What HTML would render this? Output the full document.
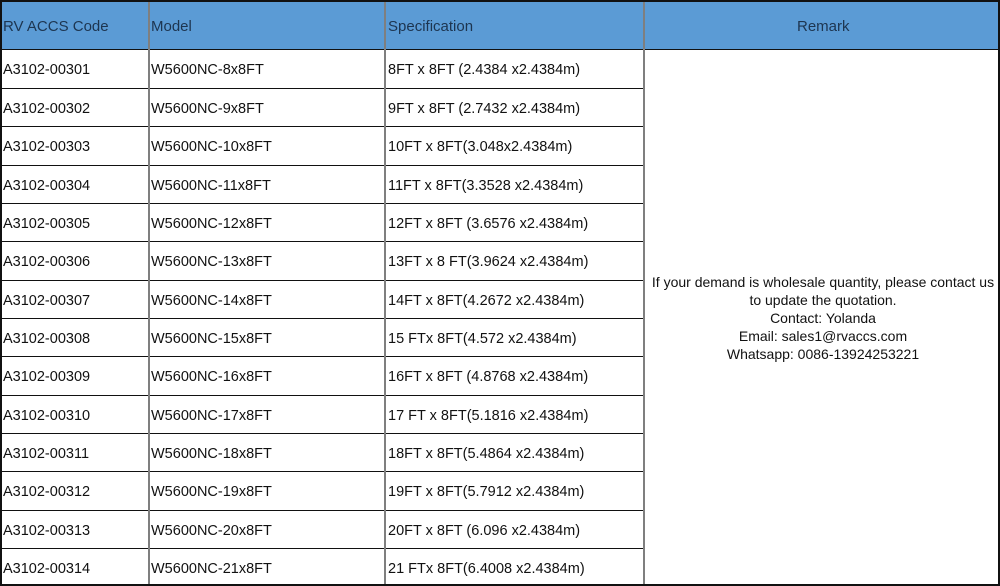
<!DOCTYPE html>
<html><head><meta charset="utf-8"><style>
html,body{margin:0;padding:0;background:#fff;}
body{width:1000px;height:586px;position:relative;overflow:hidden;font-family:"Liberation Sans",Arial,sans-serif;font-size:14px;color:#111;}
.hdr{position:absolute;left:0;top:0;width:1000px;height:49px;background:#5b9bd5;}
.h{position:absolute;white-space:nowrap;line-height:16px;color:#1d3550;top:19px;font-size:15px;}
.r{position:absolute;left:0;width:645px;height:38px;border-top:1px solid #111;box-sizing:border-box;}
.r span{position:absolute;top:12px;white-space:nowrap;line-height:16px;font-size:14.5px;}
.a{left:3px}.b{left:151px}.c{left:388px}
.vl{position:absolute;top:0;width:2px;height:586px;background:#7f7f7f;}
.rem{position:absolute;left:646px;width:354px;top:273px;text-align:center;line-height:18px;}
</style></head><body>
<div class="hdr"></div>
<div class="h" style="left:3px">RV ACCS Code</div>
<div class="h" style="left:151px">Model</div>
<div class="h" style="left:388px">Specification</div>
<div class="h" style="left:797px">Remark</div>
<div style="position:absolute;left:0;top:49px;width:1000px;height:1px;background:#111"></div>
<div class="r" style="top:49px"><span class="a">A3102-00301</span><span class="b">W5600NC-8x8FT</span><span class="c">8FT x 8FT (2.4384 x2.4384m)</span></div>
<div class="r" style="top:88px"><span class="a">A3102-00302</span><span class="b">W5600NC-9x8FT</span><span class="c">9FT x 8FT (2.7432 x2.4384m)</span></div>
<div class="r" style="top:126px"><span class="a">A3102-00303</span><span class="b">W5600NC-10x8FT</span><span class="c">10FT x 8FT(3.048x2.4384m)</span></div>
<div class="r" style="top:165px"><span class="a">A3102-00304</span><span class="b">W5600NC-11x8FT</span><span class="c">11FT x 8FT(3.3528 x2.4384m)</span></div>
<div class="r" style="top:203px"><span class="a">A3102-00305</span><span class="b">W5600NC-12x8FT</span><span class="c">12FT x 8FT (3.6576 x2.4384m)</span></div>
<div class="r" style="top:241px"><span class="a">A3102-00306</span><span class="b">W5600NC-13x8FT</span><span class="c">13FT x 8 FT(3.9624 x2.4384m)</span></div>
<div class="r" style="top:280px"><span class="a">A3102-00307</span><span class="b">W5600NC-14x8FT</span><span class="c">14FT x 8FT(4.2672 x2.4384m)</span></div>
<div class="r" style="top:318px"><span class="a">A3102-00308</span><span class="b">W5600NC-15x8FT</span><span class="c">15 FTx 8FT(4.572 x2.4384m)</span></div>
<div class="r" style="top:356px"><span class="a">A3102-00309</span><span class="b">W5600NC-16x8FT</span><span class="c">16FT x 8FT (4.8768 x2.4384m)</span></div>
<div class="r" style="top:395px"><span class="a">A3102-00310</span><span class="b">W5600NC-17x8FT</span><span class="c">17 FT x 8FT(5.1816 x2.4384m)</span></div>
<div class="r" style="top:433px"><span class="a">A3102-00311</span><span class="b">W5600NC-18x8FT</span><span class="c">18FT x 8FT(5.4864 x2.4384m)</span></div>
<div class="r" style="top:471px"><span class="a">A3102-00312</span><span class="b">W5600NC-19x8FT</span><span class="c">19FT x 8FT(5.7912 x2.4384m)</span></div>
<div class="r" style="top:510px"><span class="a">A3102-00313</span><span class="b">W5600NC-20x8FT</span><span class="c">20FT x 8FT (6.096 x2.4384m)</span></div>
<div class="r" style="top:548px"><span class="a">A3102-00314</span><span class="b">W5600NC-21x8FT</span><span class="c">21 FTx 8FT(6.4008 x2.4384m)</span></div>
<div class="vl" style="left:148px"></div>
<div class="vl" style="left:384px"></div>
<div class="vl" style="left:643px"></div>
<div style="position:absolute;left:0;top:0;width:996px;height:582px;border:2px solid #111;"></div>
<div class="rem">If your demand is wholesale quantity, please contact us<br>to update the quotation.<br>Contact: Yolanda<br>Email: sales1@rvaccs.com<br>Whatsapp: 0086-13924253221</div>
</body></html>
